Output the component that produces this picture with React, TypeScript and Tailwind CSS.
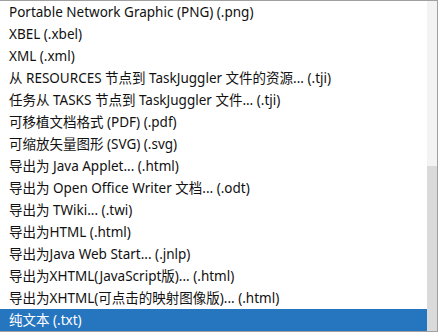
import React from 'react';

const items = [
  'Portable Network Graphic (PNG) (.png)',
  'XBEL (.xbel)',
  'XML (.xml)',
  '从 RESOURCES 节点到 TaskJuggler 文件的资源... (.tji)',
  '任务从 TASKS 节点到 TaskJuggler 文件... (.tji)',
  '可移植文档格式 (PDF) (.pdf)',
  '可缩放矢量图形 (SVG) (.svg)',
  '导出为 Java Applet... (.html)',
  '导出为 Open Office Writer 文档... (.odt)',
  '导出为 TWiki... (.twi)',
  '导出为HTML (.html)',
  '导出为Java Web Start... (.jnlp)',
  '导出为XHTML(JavaScript版)... (.html)',
  '导出为XHTML(可点击的映射图像版)... (.html)',
  '纯文本 (.txt)',
];

export default function App() {
  const selected = items.length - 1;
  return (
    <div className="w-[438px] h-[332px] bg-white">
      <div className="flex h-full border-t border-b border-r border-[#a0a0a0]">
        {/* list */}
        <div className="flex-1 flex flex-col">
          {items.map((label, i) => (
            <div
              key={label}
              className={`h-[22px] flex items-center pl-[9px] whitespace-nowrap text-[13.5px] ${
                i === selected ? 'bg-[#2675bf] text-white' : 'text-[#111]'
              }`}
              style={{ fontFamily: '"Noto Sans", "Noto Sans CJK SC", sans-serif' }}
            >
              {label}
            </div>
          ))}
        </div>
        {/* scrollbar */}
        <div className="w-[10px] flex flex-col">
          <div className="h-[165px] bg-[#f3f3f3]" />
          <div className="flex-1 bg-[#dadada]" />
        </div>
      </div>
    </div>
  );
}
